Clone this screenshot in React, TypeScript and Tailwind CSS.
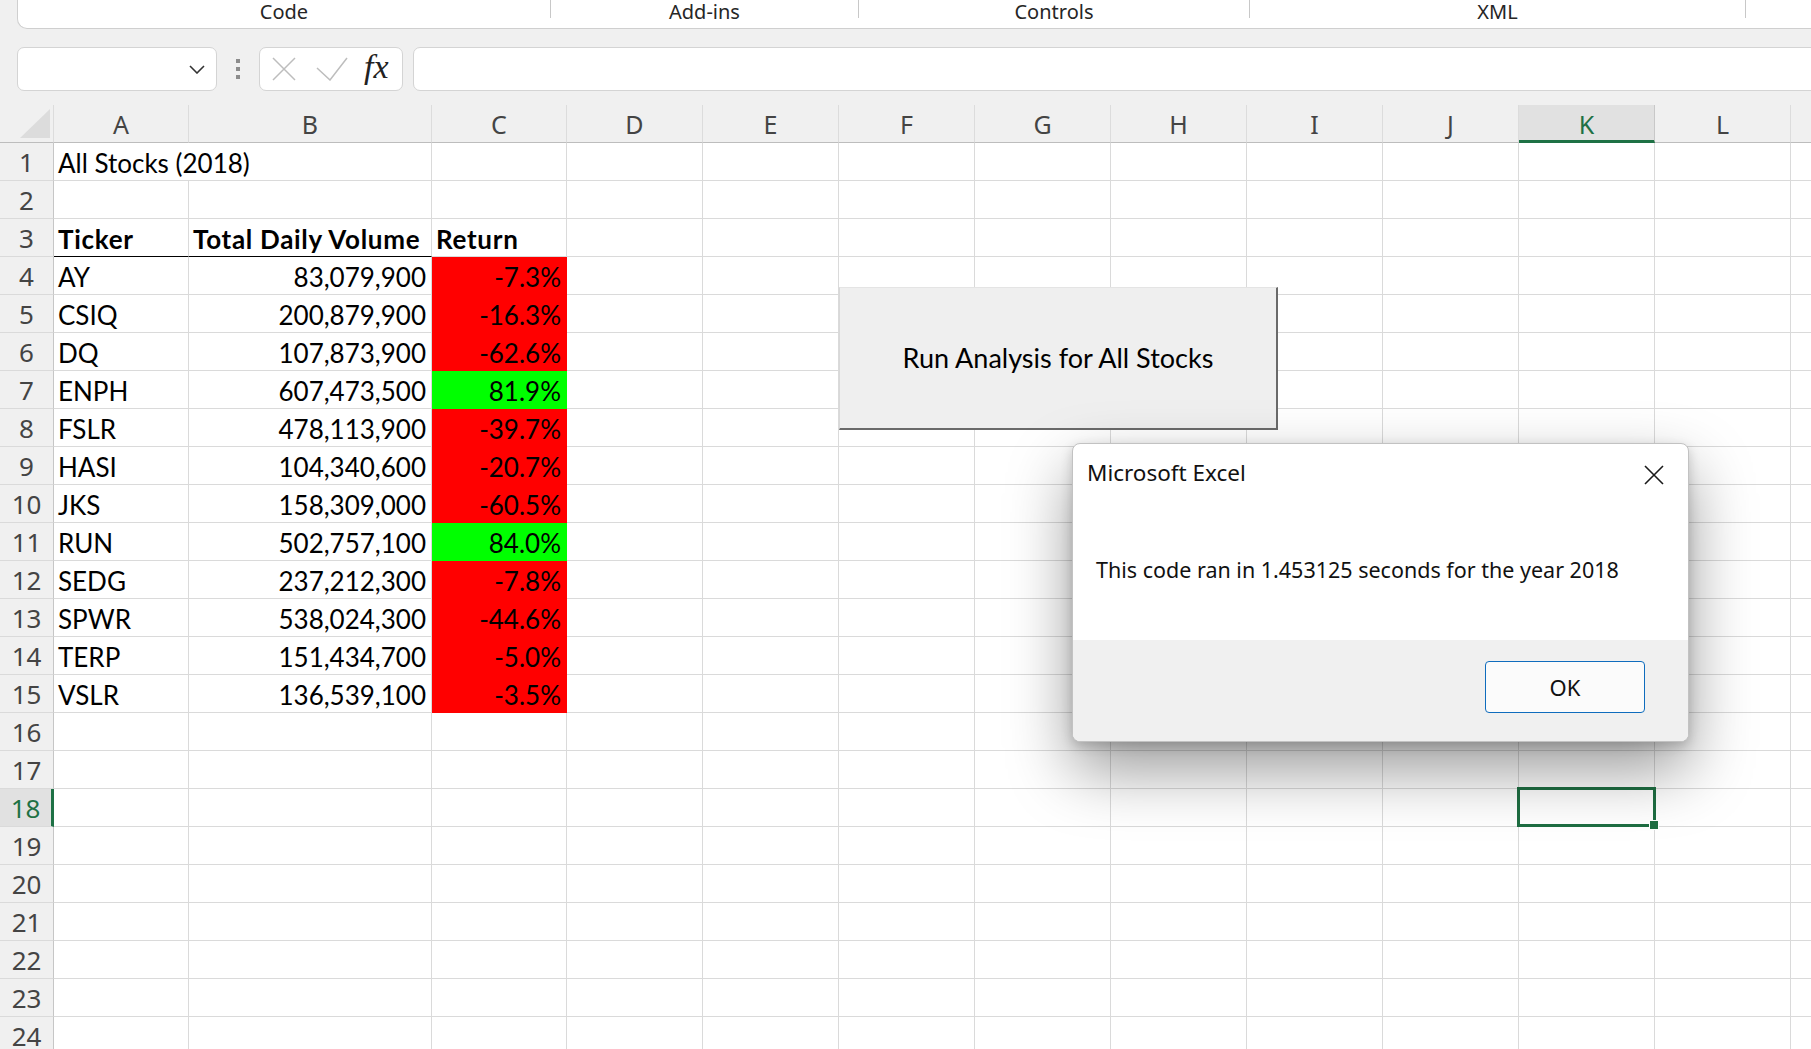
import React from 'react';

type CellData = {
  text?: string;
  right?: boolean;
  bold?: boolean;
  fill?: 'red' | 'green';
  span?: number;
  underline?: boolean;
};

const GRID =
  'grid w-max grid-cols-[54px_135px_243px_135px_136px_136px_136px_136px_136px_136px_136px_136px_136px_136px]';
const LETTERS = ['A', 'B', 'C', 'D', 'E', 'F', 'G', 'H', 'I', 'J', 'K', 'L', 'M'];

const stocks: [string, string, string][] = [
  ['AY', '83,079,900', '-7.3%'],
  ['CSIQ', '200,879,900', '-16.3%'],
  ['DQ', '107,873,900', '-62.6%'],
  ['ENPH', '607,473,500', '81.9%'],
  ['FSLR', '478,113,900', '-39.7%'],
  ['HASI', '104,340,600', '-20.7%'],
  ['JKS', '158,309,000', '-60.5%'],
  ['RUN', '502,757,100', '84.0%'],
  ['SEDG', '237,212,300', '-7.8%'],
  ['SPWR', '538,024,300', '-44.6%'],
  ['TERP', '151,434,700', '-5.0%'],
  ['VSLR', '136,539,100', '-3.5%'],
];

function buildRows(): CellData[][] {
  const rows: CellData[][] = [];
  rows.push([{ text: 'All Stocks (2018)', span: 2 }]);
  rows.push([]);
  rows.push([
    { text: 'Ticker', bold: true, underline: true },
    { text: 'Total Daily Volume', bold: true, underline: true },
    { text: 'Return', bold: true },
  ]);
  for (const [t, v, r] of stocks) {
    rows.push([
      { text: t },
      { text: v, right: true },
      { text: r, right: true, fill: r.startsWith('-') ? 'red' : 'green' },
    ]);
  }
  while (rows.length < 24) rows.push([]);
  return rows;
}

function Cell({ cell, selected }: { cell?: CellData; selected?: boolean }) {
  const c = cell ?? {};
  let color = 'bg-white border-[#dadada]';
  if (c.fill === 'red') color = 'bg-[#ff0000] border-[#ff0000]';
  if (c.fill === 'green') color = 'bg-[#00ff00] border-[#00ff00]';
  return (
    <div
      className={[
        'relative h-[38px] border-r border-b whitespace-nowrap text-[26px] leading-[41px] text-black',
        "font-['Lato',sans-serif]",
        color,
        c.underline ? 'border-b-black' : '',
        c.span === 2 ? 'col-span-2' : '',
        c.right ? 'text-right pr-[5px]' : 'pl-[4px]',
        c.bold ? 'font-bold tracking-[0.7px]' : '',
      ].join(' ')}
    >
      {c.text}
      {selected && (
        <div className="absolute -left-[2px] -top-[2px] -right-[2px] -bottom-[1px] z-10 border-[3px] border-[#1e6e42]">
          <div className="absolute -right-[6px] -bottom-[6px] h-[10px] w-[10px] border border-white bg-[#1e6e42]" />
        </div>
      )}
    </div>
  );
}

function Ribbon() {
  const groups = [
    { label: 'Code', w: 'w-[533px]' },
    { label: 'Add-ins', w: 'w-[308px]' },
    { label: 'Controls', w: 'w-[391px]' },
    { label: 'XML', w: 'w-[496px]' },
  ];
  return (
    <div className="ml-[17px] flex h-[29px] rounded-bl-[10px] border-b border-l border-[#cfcfcf] bg-white">
      {groups.map((g) => (
        <div key={g.label} className={`flex flex-none ${g.w}`}>
          <div className="flex-1 text-center text-[20px] leading-[23px] text-[#262626]">{g.label}</div>
          <div className="h-[18px] w-px bg-[#c8c8c8]" />
        </div>
      ))}
    </div>
  );
}

function FormulaBar() {
  return (
    <div className="mt-[18px] flex h-[44px] items-center">
      <div className="ml-[17px] flex h-[44px] w-[200px] items-center justify-end rounded-[7px] border border-[#d4d4d4] bg-white pr-[11px]">
        <svg width="16" height="9" viewBox="0 0 16 9" fill="none">
          <path d="M1 1l7 7 7-7" stroke="#333" strokeWidth="1.6" />
        </svg>
      </div>
      <div className="flex w-[42px] flex-col items-center gap-[4px]">
        <div className="h-[4px] w-[4px] bg-[#8c8c8c]" />
        <div className="h-[4px] w-[4px] bg-[#8c8c8c]" />
        <div className="h-[4px] w-[4px] bg-[#8c8c8c]" />
      </div>
      <div className="flex h-[44px] w-[144px] items-center rounded-[7px] border border-[#d4d4d4] bg-white">
        <svg className="ml-[12px]" width="24" height="24" viewBox="0 0 24 24" fill="none">
          <path d="M1 1l22 22M23 1L1 23" stroke="#bdbdbd" strokeWidth="1.5" />
        </svg>
        <svg className="ml-[20px]" width="32" height="24" viewBox="0 0 32 24" fill="none">
          <path d="M1 11l13 12L31 1" stroke="#bdbdbd" strokeWidth="1.5" />
        </svg>
        <span className="ml-[16px] -mt-[4px] font-['Liberation_Serif',serif] text-[34px] italic leading-none text-[#222]">
          fx
        </span>
      </div>
      <div className="-mr-[20px] ml-[10px] h-[44px] flex-1 rounded-[7px] border border-[#d4d4d4] bg-white" />
    </div>
  );
}

function Sheet() {
  const rows = buildRows();
  return (
    <div className="mt-[14px] font-['Noto_Sans',sans-serif]">
      <div className={GRID}>
        <div className="relative h-[38px] border-r border-b border-[#bdbdbd] border-r-[#dcdcdc]">
          <svg className="absolute left-[20px] top-[4px]" width="30" height="29" viewBox="0 0 30 29">
            <polygon points="30,0 30,29 0,29" fill="#dcdcdc" />
          </svg>
        </div>
        {LETTERS.map((l) =>
          l === 'K' ? (
            <div
              key={l}
              className="h-[38px] border-r border-b-[3px] border-r-[#c8c8c8] border-b-[#1e7145] bg-[#e1e1e1] pt-[2px] text-center text-[25px] leading-[34px] text-[#1e7145]"
            >
              {l}
            </div>
          ) : (
            <div
              key={l}
              className="h-[38px] border-r border-b border-r-[#dcdcdc] border-b-[#bdbdbd] pt-[2px] text-center text-[25px] leading-[35px] text-[#444]"
            >
              {l}
            </div>
          ),
        )}
        {rows.map((row, i) => {
          const n = i + 1;
          const cells: React.ReactNode[] = [];
          let col = 0;
          let idx = 0;
          while (col < LETTERS.length) {
            const c = row[idx];
            idx++;
            cells.push(<Cell key={col} cell={c} selected={n === 18 && col === 10} />);
            col += c?.span ?? 1;
          }
          return (
            <React.Fragment key={n}>
              {n === 18 ? (
                <div className="h-[38px] border-b border-r-[3px] border-b-[#dadada] border-r-[#1e7145] bg-[#e1e1e1] pt-[1px] text-center text-[26px] leading-[37px] text-[#1e7145]">
                  {n}
                </div>
              ) : (
                <div className="h-[38px] border-b border-r border-b-[#dadada] border-r-[#c6c6c6] bg-[#f0f0f0] pt-[1px] text-center text-[26px] leading-[37px] text-[#444]">
                  {n}
                </div>
              )}
              {cells}
            </React.Fragment>
          );
        })}
      </div>
    </div>
  );
}

function MacroButton() {
  return (
    <div className="absolute left-[839px] top-[287px] z-10 flex h-[143px] w-[439px] items-center justify-center border-t border-l border-t-[#e4e4e4] border-l-[#d8d8d8] border-r-2 border-b-2 border-r-[#6a6a6a] border-b-[#6a6a6a] bg-[#efefef] font-['Lato',sans-serif] text-[27px] text-black">
      Run Analysis for All Stocks
    </div>
  );
}

function MessageBox() {
  return (
    <div className="absolute left-[1072px] top-[443px] z-20 flex h-[299px] w-[617px] flex-col overflow-hidden rounded-[8px] border border-[#c2c2c2] bg-white font-['Noto_Sans',sans-serif] shadow-[0_28px_64px_rgba(0,0,0,0.4),0_4px_12px_rgba(0,0,0,0.18)]">
      <div className="flex h-[56px] items-center justify-between pl-[14px] pr-[24px] pt-[2px]">
        <span className="text-[22.5px] text-[#111]">Microsoft Excel</span>
        <svg className="mt-[4px]" width="20" height="20" viewBox="0 0 20 20" fill="none">
          <path d="M1 1l18 18M19 1L1 19" stroke="#1a1a1a" strokeWidth="1.6" />
        </svg>
      </div>
      <div className="flex h-[140px] items-center pl-[23px] text-[21.5px] text-[#111]">
        This code ran in 1.453125 seconds for the year 2018
      </div>
      <div className="flex flex-1 items-start justify-end bg-[#f0f0f0] pr-[43px] pt-[21px]">
        <div className="flex h-[52px] w-[160px] items-center justify-center rounded-[4px] border border-[#0f6cbd] bg-[#fbfbfb] text-[22px] text-[#111]">
          OK
        </div>
      </div>
    </div>
  );
}

export default function App() {
  return (
    <div className="relative h-[1049px] w-[1811px] overflow-hidden bg-[#f0f0f0] font-['Noto_Sans',sans-serif]">
      <Ribbon />
      <FormulaBar />
      <Sheet />
      <MacroButton />
      <MessageBox />
    </div>
  );
}
